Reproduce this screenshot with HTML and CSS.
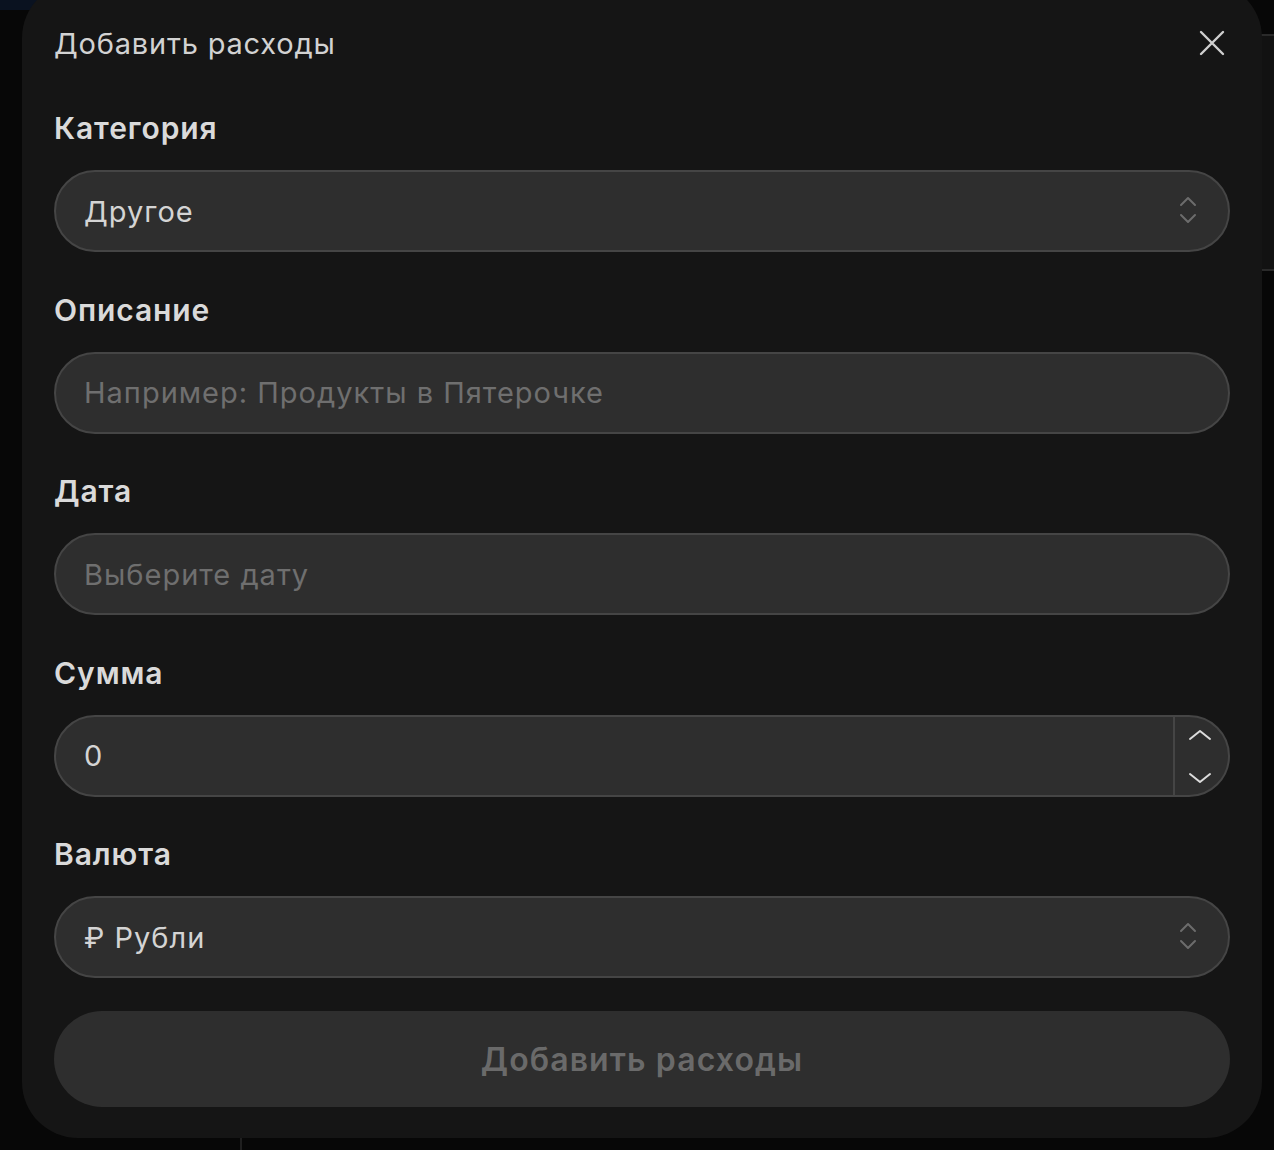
FILE: index.html
```html
<!DOCTYPE html>
<html lang="ru">
<head>
<meta charset="utf-8">
<title>Добавить расходы</title>
<link rel="stylesheet" href="styles.css">
</head>
<body>
<div class="backdrop-strip"></div>
<div class="backdrop-panel"></div>
<div class="backdrop-line"></div>
<div class="modal">
  <div class="modal-header">
    <h2 class="modal-title">Добавить расходы</h2>
    <button class="close-btn" aria-label="Закрыть">
      <svg width="26" height="26" viewBox="0 0 26 26"><path d="M2 2 L24 24 M24 2 L2 24" stroke="#cfcfcf" stroke-width="2.4" stroke-linecap="round" fill="none"/></svg>
    </button>
  </div>
  <form class="form">
    <div class="field">
      <label class="label">Категория</label>
      <div class="control select">
        <span class="value">Другое</span>
        <svg class="updown" width="18" height="28" viewBox="0 0 18 28"><path d="M2 9 L9 2 L16 9 M2 19 L9 26 L16 19" stroke="#6c6c6c" stroke-width="2" fill="none" stroke-linecap="round" stroke-linejoin="round"/></svg>
      </div>
    </div>
    <div class="field">
      <label class="label">Описание</label>
      <div class="control"><span class="placeholder">Например: Продукты в Пятерочке</span></div>
    </div>
    <div class="field">
      <label class="label">Дата</label>
      <div class="control"><span class="placeholder">Выберите дату</span></div>
    </div>
    <div class="field">
      <label class="label">Сумма</label>
      <div class="control number">
        <span class="value">0</span>
        <div class="spinner">
          <svg width="24" height="12" viewBox="0 0 24 12"><path d="M2 10 L12 2 L22 10" stroke="#dcdcdc" stroke-width="2" fill="none" stroke-linecap="round" stroke-linejoin="round"/></svg>
          <svg width="24" height="12" viewBox="0 0 24 12"><path d="M2 2 L12 10 L22 2" stroke="#dcdcdc" stroke-width="2" fill="none" stroke-linecap="round" stroke-linejoin="round"/></svg>
        </div>
      </div>
    </div>
    <div class="field">
      <label class="label">Валюта</label>
      <div class="control select">
        <span class="value">₽ Рубли</span>
        <svg class="updown" width="18" height="28" viewBox="0 0 18 28"><path d="M2 9 L9 2 L16 9 M2 19 L9 26 L16 19" stroke="#6c6c6c" stroke-width="2" fill="none" stroke-linecap="round" stroke-linejoin="round"/></svg>
      </div>
    </div>
    <button type="button" class="submit">Добавить расходы</button>
  </form>
</div>
</body>
</html>
```

FILE: styles.css
```css
* { box-sizing: border-box; }
html, body {
  margin: 0;
  padding: 0;
  background: #070707;
  height: 1150px;
  overflow: hidden;
  font-family: Inter, "Noto Sans", sans-serif;
}
body { position: relative; }

.backdrop-strip {
  position: absolute;
  left: 0; top: 0;
  width: 200px; height: 10px;
  background: #0a1220;
}
.backdrop-panel {
  position: absolute;
  left: 1200px; top: 34px;
  width: 80px; height: 237px;
  background: #121212;
  border-top: 2px solid #2a2a2a;
  border-bottom: 2px solid #2a2a2a;
}
.backdrop-line {
  position: absolute;
  left: 240px; top: 1100px;
  width: 2px; height: 60px;
  background: #1f1f1f;
}

.modal {
  position: relative;
  z-index: 1;
  margin: -18px 0 0 22px;
  width: 1240px;
  height: 1156px;
  background: #151515;
  border-radius: 56px;
  padding: 37px 32px 31px;
}

.modal-header {
  height: 48px;
  display: flex;
  align-items: center;
  justify-content: space-between;
}
.modal-title {
  margin: 0;
  font-size: 29px;
  font-weight: 400;
  color: #d2d2d2;
  letter-spacing: 0.8px;
}
.close-btn {
  background: none;
  border: 0;
  padding: 0;
  margin-right: 5px;
  margin-top: -1px;
  width: 26px;
  height: 26px;
  display: flex;
}

.form {
  margin-top: 43px;
  display: flex;
  flex-direction: column;
  gap: 39.5px;
}
.field {
  display: flex;
  flex-direction: column;
  gap: 24px;
}
.label {
  height: 36px;
  line-height: 36px;
  font-size: 30px;
  font-weight: 600;
  color: #dadada;
  letter-spacing: 0.9px;
}
.control {
  height: 82px;
  flex-shrink: 0;
  border: 2px solid #454545;
  background: #2e2e2e;
  border-radius: 41px;
  display: flex;
  align-items: center;
  padding: 0 28px;
  font-size: 29px;
  color: #d4d4d4;
  letter-spacing: 1px;
}
.placeholder { color: #6f6f6f; }
.select { justify-content: space-between; padding-right: 31px; }
.updown { display: block; margin-top: -2px; }
.number { padding-right: 0; justify-content: space-between; }
.spinner {
  height: 100%;
  width: 55px;
  border-left: 2px solid #454545;
  display: flex;
  flex-direction: column;
  justify-content: space-between;
  align-items: center;
  padding: 12px 12px 11px 0;
}
.spinner svg { display: block; margin-left: 8px; }

.submit {
  margin-top: -6.5px;
  height: 96px;
  flex-shrink: 0;
  border: 0;
  border-radius: 48px;
  background: #2e2e2e;
  color: #6a6a6a;
  font-family: Inter, "Noto Sans", sans-serif;
  font-size: 32px;
  font-weight: 600;
  letter-spacing: 1.1px;
}
```
